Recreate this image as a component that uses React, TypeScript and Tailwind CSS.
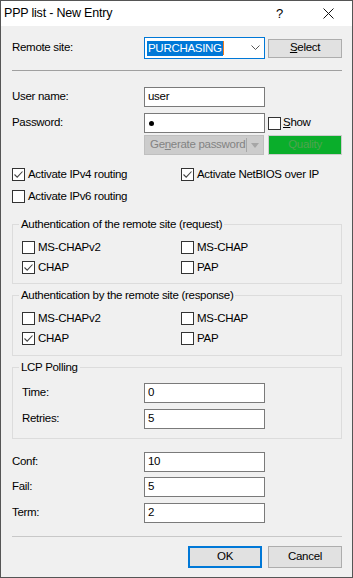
import React from "react";

const FONT = { fontFamily: '"Liberation Sans", Arial, sans-serif' };

function Check({ checked = false }: { checked?: boolean }) {
  return (
    <span className="w-[13px] h-[13px] border border-[#333333] bg-white flex items-center justify-center shrink-0">
      {checked && (
        <svg width="11" height="11" viewBox="0 0 11 11">
          <path d="M1.5 5.5 L4.2 8.2 L9.5 2.5" fill="none" stroke="#444" strokeWidth="1.1" />
        </svg>
      )}
    </span>
  );
}

function CheckLabel({ label, checked }: { label: string; checked?: boolean }) {
  return (
    <div className="flex items-center h-[13px]">
      <Check checked={checked} />
      <span className="ml-[3px] leading-none whitespace-nowrap">{label}</span>
    </div>
  );
}

function Field({ value }: { value: string }) {
  return (
    <div className="w-[121px] h-[20px] border border-[#7a7a7a] bg-white flex items-center pl-[3px]">
      {value}
    </div>
  );
}

function Row({ label, value, labelW = 132, mt }: { label: string; value: string; labelW?: number; mt: string }) {
  return (
    <div className={`flex items-center ${mt}`}>
      <div style={{ width: labelW }}>{label}</div>
      <Field value={value} />
    </div>
  );
}

function Group({ title, children, className = "" }: { title: string; children: React.ReactNode; className?: string }) {
  return (
    <div className={`relative border border-[#dcdcdc] ${className}`}>
      <span className="absolute -top-[8px] left-[6px] px-[2px] bg-[#f0f0f0] leading-[14px] whitespace-nowrap">{title}</span>
      {children}
    </div>
  );
}

function AuthGrid() {
  return (
    <div className="grid grid-cols-[159px_1fr] gap-y-[7px] pl-[9px] pt-[16px]">
      <CheckLabel label="MS-CHAPv2" />
      <CheckLabel label="MS-CHAP" />
      <CheckLabel label="CHAP" checked />
      <CheckLabel label="PAP" />
    </div>
  );
}

export default function App() {
  return (
    <div
      style={FONT}
      className="w-[353px] h-[578px] border border-[#555555] bg-[#f0f0f0] text-[11.5px] tracking-[-0.3px] text-black flex flex-col overflow-hidden"
    >
      {/* title bar */}
      <div className="h-[25px] bg-white flex items-center shrink-0">
        <span className="ml-[3px] text-[12.5px] tracking-[-0.2px]">PPP list - New Entry</span>
        <span className="ml-auto mr-[40px] text-[13px]">?</span>
        <svg width="11" height="11" viewBox="0 0 11 11" className="mr-[18px]">
          <path d="M0.5 0.5 L10.5 10.5 M10.5 0.5 L0.5 10.5" stroke="#111" strokeWidth="1" />
        </svg>
      </div>

      <div className="ml-[11px] w-[330px] flex flex-col">
        {/* remote site */}
        <div className="flex items-center mt-[11px]">
          <div className="w-[132px]">Remote site:</div>
          <div className="w-[121px] h-[22px] border border-[#0078d7] bg-white flex items-center pl-[2px]">
            <span className="bg-[#0078d7] text-white px-[1px] leading-[15px]">PURCHASING</span>
            <span className="w-[1px] h-[14px] bg-[#f07b1e]" />
            <svg width="9" height="6" viewBox="0 0 9 6" className="ml-auto mr-[4px]">
              <path d="M0.5 0.5 L4.5 4.5 L8.5 0.5" fill="none" stroke="#555" strokeWidth="1" />
            </svg>
          </div>
          <div className="ml-[3px] w-[74px] h-[19px] border border-[#adadad] bg-[#e1e1e1] flex items-center justify-center">
            <span><span className="underline">S</span>elect</span>
          </div>
        </div>

        <div className="mt-[11px] h-[1px] bg-[#a0a0a0]" />

        {/* user / password */}
        <Row label="User name:" value="user" mt="mt-[16px]" />
        <div className="flex items-center mt-[6px]">
          <div className="w-[132px]">Password:</div>
          <div className="w-[121px] h-[20px] border border-[#7a7a7a] bg-white flex items-center pl-[4px]">
            <span className="w-[5px] h-[5px] rounded-full bg-black" />
          </div>
          <div className="ml-[3px] flex items-center">
            <Check />
            <span className="ml-[2px]"><span className="underline">S</span>how</span>
          </div>
        </div>
        <div className="flex items-center mt-[2px]">
          <div className="w-[132px]" />
          <div className="w-[120px] h-[20px] border border-[#bfbfbf] bg-[#cccccc] flex items-center text-[#838383] whitespace-nowrap">
            <span className="ml-[5px]">Ge<span className="underline">n</span>erate password</span>
            <span className="ml-auto w-[1px] h-[14px] bg-[#a8a8a8]" />
            <svg width="8" height="5" viewBox="0 0 8 5" className="mx-[4px]">
              <path d="M0 0 L8 0 L4 5 Z" fill="#a6a6a6" />
            </svg>
          </div>
          <div className="ml-[4px] w-[74px] h-[20px] border border-[#cccccc] bg-[#0aae2b] flex items-center justify-center text-[#4fa34f]">
            Quality
          </div>
        </div>

        {/* routing */}
        <div className="flex mt-[13px]">
          <div className="w-[169px]"><CheckLabel label="Activate IPv4 routing" checked /></div>
          <CheckLabel label="Activate NetBIOS over IP" checked />
        </div>
        <div className="mt-[9px]"><CheckLabel label="Activate IPv6 routing" /></div>

        <Group title="Authentication of the remote site (request)" className="mt-[21px] h-[60px]">
          <AuthGrid />
        </Group>
        <Group title="Authentication by the remote site (response)" className="mt-[11px] h-[61px]">
          <AuthGrid />
        </Group>

        <Group title="LCP Polling" className="mt-[11px] h-[72px]">
          <div className="flex flex-col pl-[9px]">
            <Row label="Time:" value="0" labelW={122} mt="mt-[15px]" />
            <Row label="Retries:" value="5" labelW={122} mt="mt-[6px]" />
          </div>
        </Group>

        <Row label="Conf:" value="10" mt="mt-[13px]" />
        <Row label="Fail:" value="5" mt="mt-[5px]" />
        <Row label="Term:" value="2" mt="mt-[6px]" />

        <div className="mt-[13px] h-[1px] bg-[#c8c8c8]" />

        <div className="flex justify-end gap-[6px] mt-[9px]">
          <div className="w-[74px] h-[22px] border-2 border-[#0078d7] bg-[#e1e1e1] flex items-center justify-center">OK</div>
          <div className="w-[74px] h-[22px] border border-[#adadad] bg-[#e1e1e1] flex items-center justify-center">Cancel</div>
        </div>
      </div>
    </div>
  );
}
